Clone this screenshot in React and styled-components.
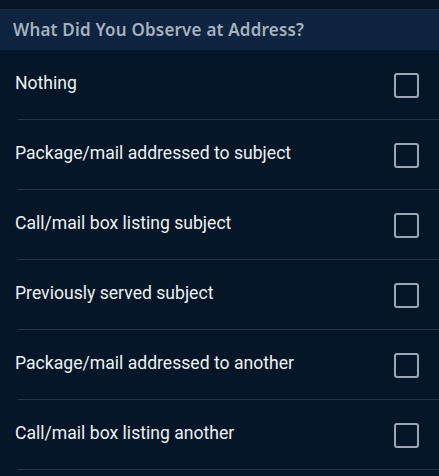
import React, { useState } from 'react';
import styled, { createGlobalStyle } from 'styled-components';

const GlobalStyle = createGlobalStyle`
  html, body {
    margin: 0;
    padding: 0;
    background-color: #051628;
  }
`;

const Page = styled.div`
  width: 439px;
  min-height: 476px;
  background-color: #051628;
  overflow: hidden;
`;

const TopStrip = styled.div`
  height: 9px;
  background-color: #061527;
  border-bottom: 1px solid #1b2f47;
`;

const SectionHeader = styled.div`
  height: 40px;
  padding-left: 13px;
  padding-bottom: 1px;
  box-sizing: border-box;
  display: flex;
  align-items: center;
  background-color: #0e233e;
  color: #a3b1c1;
  font-family: "Noto Sans", "Open Sans", sans-serif;
  font-size: 17px;
  font-weight: 600;
  letter-spacing: 0.2px;
`;

const List = styled.div`
  display: flex;
  flex-direction: column;
`;

const Row = styled.label`
  position: relative;
  height: 70px;
  padding: 0 20px 0 15px;
  display: flex;
  align-items: center;
  justify-content: space-between;
  cursor: pointer;

  &::after {
    content: '';
    position: absolute;
    left: 18px;
    right: 0;
    bottom: 0;
    height: 1px;
    background-color: #253446;
  }
`;

const Label = styled.span`
  color: #eef2f6;
  font-family: Roboto, "Liberation Sans", sans-serif;
  font-size: 17.6px;
  font-weight: 400;
  padding-bottom: 4px;
`;

const Box = styled.span`
  width: 21px;
  height: 21px;
  border: 2.5px solid ${p => (p.checked ? '#6fa8dc' : '#9aa8b6')};
  border-radius: 3px;
  background-color: ${p => (p.checked ? '#6fa8dc' : 'transparent')};
  display: flex;
  align-items: center;
  justify-content: center;
`;

const options = [
  'Nothing',
  'Package/mail addressed to subject',
  'Call/mail box listing subject',
  'Previously served subject',
  'Package/mail addressed to another',
  'Call/mail box listing another',
];

const App = () => {
  const [checked, setChecked] = useState({});

  const toggle = (i) => setChecked(c => ({ ...c, [i]: !c[i] }));

  return (
    <Page>
      <GlobalStyle />
      <TopStrip />
      <SectionHeader>What Did You Observe at Address?</SectionHeader>
      <List>
        {options.map((text, i) => (
          <Row key={text} onClick={() => toggle(i)}>
            <Label>{text}</Label>
            <Box checked={!!checked[i]} />
          </Row>
        ))}
      </List>
    </Page>
  );
};

export default App;
